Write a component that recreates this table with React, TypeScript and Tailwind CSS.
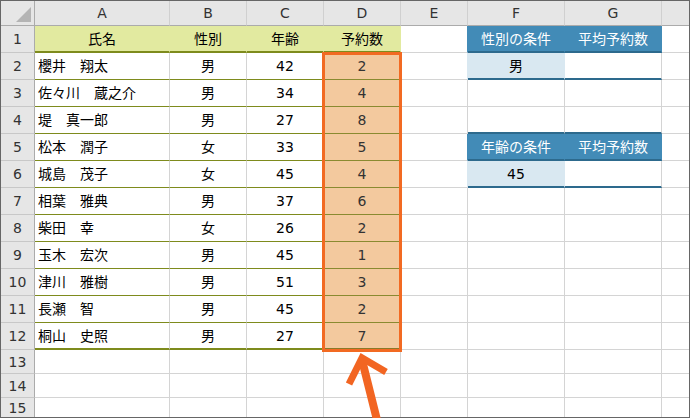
import React from "react";

const DATA: [string, string, string, string][] = [
  ["櫻井　翔太", "男", "42", "2"],
  ["佐々川　蔵之介", "男", "34", "4"],
  ["堤　真一郎", "男", "27", "8"],
  ["松本　潤子", "女", "33", "5"],
  ["城島　茂子", "女", "45", "4"],
  ["相葉　雅典", "男", "37", "6"],
  ["柴田　幸", "女", "26", "2"],
  ["玉木　宏次", "男", "45", "1"],
  ["津川　雅樹", "男", "51", "3"],
  ["長瀬　智", "男", "45", "2"],
  ["桐山　史照", "男", "27", "7"],
];

const LETTERS = ["", "A", "B", "C", "D", "E", "F", "G", ""];

function cellText(r: number, c: number): string {
  if (r === 1) {
    if (c === 1) return "氏名";
    if (c === 2) return "性別";
    if (c === 3) return "年齢";
    if (c === 4) return "予約数";
    if (c === 6) return "性別の条件";
    if (c === 7) return "平均予約数";
  }
  if (r >= 2 && r <= 12 && c >= 1 && c <= 4) return DATA[r - 2][c - 1];
  if (r === 2 && c === 6) return "男";
  if (r === 5 && c === 6) return "年齢の条件";
  if (r === 5 && c === 7) return "平均予約数";
  if (r === 6 && c === 6) return "45";
  return "";
}

function cellClass(r: number, c: number): string {
  const base = "flex items-center overflow-hidden whitespace-nowrap leading-none ";
  // header row
  if (r === 0) {
    if (c === 0) return base + "relative bg-[#e6e6e6] border-r border-b border-[#ababab]";
    if (c === 8) return base + "justify-center bg-[#e6e6e6] border-b border-[#ababab] text-[#333]";
    return base + "justify-center bg-[#e6e6e6] border-b border-b-[#ababab] border-r border-r-[#d0d0d0] text-[#333]";
  }
  // row header
  if (c === 0) {
    if (r === 15) return base + "justify-center bg-[#e6e6e6] border-r border-[#ababab] text-[#333]";
    return base + "justify-center bg-[#e6e6e6] border-r border-r-[#ababab] border-b border-b-[#c8c8c8] text-[#333]";
  }
  // olive table header
  if (r === 1 && c >= 1 && c <= 4)
    return base + "justify-center bg-[#e2eaa0] border-r border-r-[#e2eaa0] border-b-2 border-b-[#7e8b1d] text-black";
  // olive table body
  if (r >= 2 && r <= 12 && c >= 1 && c <= 3) {
    const just = c === 1 ? "justify-start pl-[3px] " : "justify-center ";
    if (r === 12) return base + just + "border-r border-r-[#d4d4d4] border-b-2 border-b-[#7e8b1d] text-black";
    return base + just + "border-r border-r-[#d4d4d4] border-b border-b-[#7e8b1d] text-black";
  }
  if (r >= 2 && r <= 12 && c === 4) {
    if (r === 12) return base + "justify-center bg-[#f3c99e] border-r border-r-[#f3c99e] border-b-2 border-b-[#8a7a2a] text-[#333]";
    return base + "justify-center bg-[#f3c99e] border-r border-r-[#f3c99e] border-b border-b-[#8a8a30] text-[#333]";
  }
  // blue tables
  if ((r === 1 || r === 5) && (c === 6 || c === 7))
    return base + "justify-center bg-[#428bb7] border-r border-r-[#428bb7] border-b-2 border-b-[#2d6a8d] text-white";
  if ((r === 2 || r === 6) && c === 6)
    return base + "justify-center bg-[#d9e8f1] border-r border-r-[#d9e8f1] border-b-2 border-b-[#2d6a8d] text-black";
  if ((r === 2 || r === 6) && c === 7)
    return base + "justify-center border-r border-r-[#d4d4d4] border-b-2 border-b-[#2d6a8d]";
  if (r === 4 && (c === 6 || c === 7))
    return base + "border-r border-r-[#d4d4d4] border-b-2 border-b-[#2d6a8d]";
  if ((r === 1 || r === 5) && c === 5)
    return base + "border-r border-r-[#428bb7] border-b border-b-[#d4d4d4]";
  if ((r === 2 || r === 6) && c === 5)
    return base + "border-r border-r-[#d9e8f1] border-b border-b-[#d4d4d4]";
  // default cells
  if (c === 8 && r === 15) return base;
  if (c === 8) return base + "border-b border-[#d4d4d4]";
  if (r === 15) return base + "border-r border-[#d4d4d4]";
  return base + "border-r border-b border-[#d4d4d4]";
}

export default function App() {
  const cells: React.ReactNode[] = [];
  for (let r = 0; r < 16; r++) {
    for (let c = 0; c < 9; c++) {
      let content: React.ReactNode = "";
      if (r === 0) {
        if (c === 0) {
          content = (
            <svg className="absolute left-0 top-0" width="33" height="24" viewBox="0 0 33 24">
              <polygon points="30,6 30,21 15,21" fill="#b4b4b4" />
            </svg>
          );
        } else content = LETTERS[c];
      } else if (c === 0) {
        content = String(r);
      } else {
        content = cellText(r, c);
      }
      cells.push(
        <div key={`${r}-${c}`} className={cellClass(r, c)}>
          {content}
        </div>
      );
    }
  }

  return (
    <div className="relative w-[690px] h-[418px] overflow-hidden bg-white font-['DejaVu_Sans','Noto_Sans_CJK_JP',sans-serif] text-[14px]">
      <div className="w-[690px] h-[418px] border border-[#666666]">
        <div className="grid grid-cols-[34px_135px_77px_77px_77px_67px_97px_97px_27px] grid-rows-[25px_repeat(12,27px)_24px_24px_19px]">
          {cells}
        </div>
      </div>
      <div className="absolute left-[322px] top-[52px] w-[80px] h-[300px] border-[3px] border-[#f26a22]" />
      <svg className="absolute left-0 top-0" width="690" height="418" viewBox="0 0 690 418">
        <line x1="362.5" y1="362" x2="378.5" y2="426" stroke="#f26522" strokeWidth="8" />
        <polyline
          points="349,384 362,358 386,372"
          fill="none"
          stroke="#f26522"
          strokeWidth="7"
          strokeLinejoin="miter"
          strokeMiterlimit="10"
        />
      </svg>
    </div>
  );
}
